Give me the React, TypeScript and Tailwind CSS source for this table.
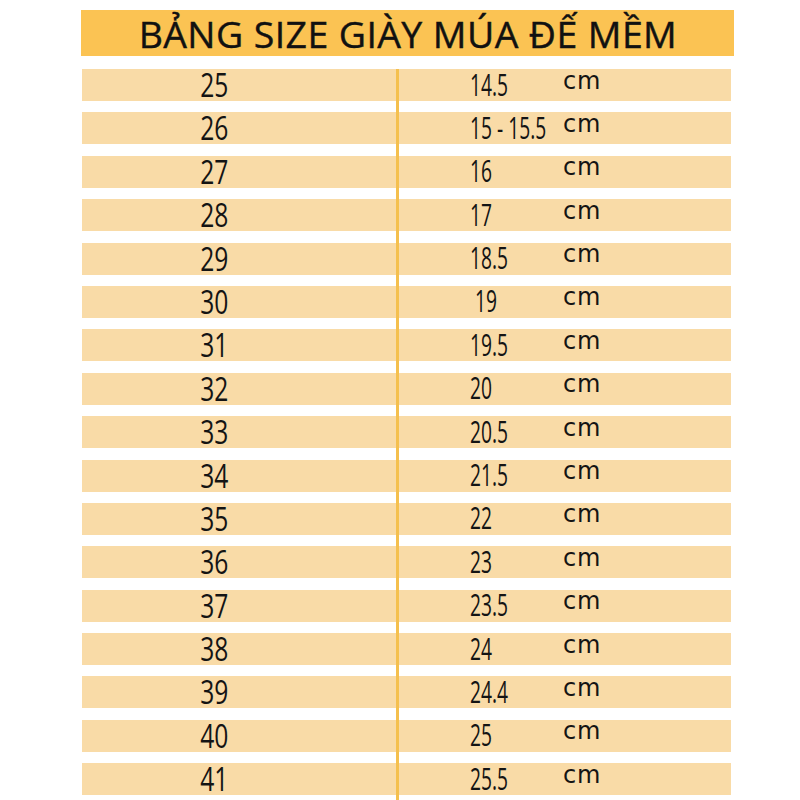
const sizes: [string, string][] = [
  ["25", "14.5"],
  ["26", "15 - 15.5"],
  ["27", "16"],
  ["28", "17"],
  ["29", "18.5"],
  ["30", "19"],
  ["31", "19.5"],
  ["32", "20"],
  ["33", "20.5"],
  ["34", "21.5"],
  ["35", "22"],
  ["36", "23"],
  ["37", "23.5"],
  ["38", "24"],
  ["39", "24.4"],
  ["40", "25"],
  ["41", "25.5"],
]

const numFont = { fontFamily: '"Open Sans", "Liberation Sans", sans-serif' }

export default function App() {
  return (
    <div className="w-[800px] h-[800px] bg-white overflow-hidden pt-[10px]">
      <div
        className="ml-[81px] w-[653px] h-[46px] bg-[#fbc353] flex items-center justify-center pt-[4px]"
        style={numFont}
      >
        <span className="inline-block text-[36px] leading-none text-[#111] tracking-[0.4px] scale-x-[1.04] [-webkit-text-stroke:0.4px_#111]">
          BẢNG SIZE GIÀY MÚA ĐẾ MỀM
        </span>
      </div>

      <div className="mt-[13px] ml-[82px] w-[649px] grid grid-cols-[314px_3px_1fr] gap-y-[11.4px]">
        <div className="col-start-2 row-start-1 row-span-17 bg-[#f5c04e] -mb-[20px]" />
        {sizes.map(([eu, cm], i) => (
          <Row key={eu} eu={eu} cm={cm} row={i + 1} />
        ))}
      </div>
    </div>
  )
}

function Row({ eu, cm, row }: { eu: string; cm: string; row: number }) {
  return (
    <>
      <div
        className="col-start-1 h-[32px] bg-[#f9dba7] flex items-center"
        style={{ gridRowStart: row }}
      >
        <div className="ml-[102px] w-[60px] flex justify-center">
          <span
            className="inline-block text-[32px] leading-none text-[#141414] scale-x-[0.77]"
            style={numFont}
          >
            {eu}
          </span>
        </div>
      </div>
      <div
        className="col-start-3 h-[32px] bg-[#f9dba7] flex items-center"
        style={{ gridRowStart: row }}
      >
        <div className={row === 6 ? "ml-[76px] w-[88px]" : "ml-[71px] w-[93px]"}>
          <span
            className="inline-block text-[31px] leading-none text-[#141414] origin-left scale-x-[0.62] whitespace-nowrap"
            style={numFont}
          >
            {cm}
          </span>
        </div>
        <span
          className="-mt-[9px] text-[24px] leading-none text-[#141414] tracking-[0.8px]"
          style={{ fontFamily: '"DejaVu Sans", "Liberation Sans", sans-serif' }}
        >
          cm
        </span>
      </div>
    </>
  )
}
